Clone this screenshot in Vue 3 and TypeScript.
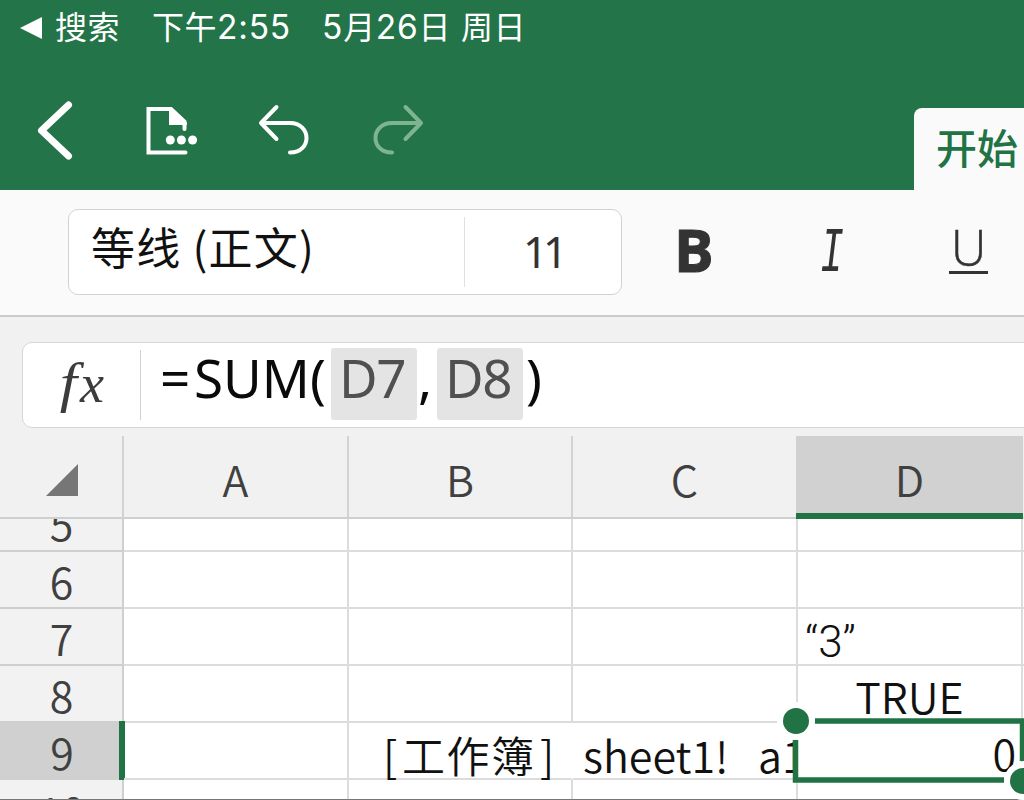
<script setup lang="ts">
interface Cell {
  text?: string
  kind?: string
  open?: boolean
}
interface Row {
  label: string
  kind: string
  cells: Cell[]
}

const columns = ['A', 'B', 'C', 'D']
const blank = (): Cell[] => [{}, {}, {}, {}]
const rows: Row[] = [
  { label: '5', kind: 'first', cells: blank() },
  { label: '6', kind: '', cells: blank() },
  { label: '7', kind: '', cells: [{}, {}, {}, { text: '“3”', kind: 'left' }] },
  { label: '8', kind: '', cells: [{}, {}, {}, { text: 'TRUE', kind: 'center' }] },
  { label: '9', kind: 'active', cells: [{}, { kind: 'long', open: true }, {}, { text: '0', kind: 'right' }] },
  { label: '10', kind: 'last', cells: blank() },
]
</script>

<template>
  <div class="screen">
    <header class="top">
      <div class="status">
        <svg class="tri" width="24" height="24" viewBox="0 0 24 24"><path d="M1 12L23 1V23Z" fill="#fff" /></svg>
        <span class="s1">搜索</span>
        <span class="s2">下午<b>2:55</b></span>
        <span class="s3"><b>5</b>月<b>26</b>日</span>
        <span class="s4">周日</span>
      </div>
      <div class="nav">
        <svg class="icons" width="440" height="82" viewBox="0 0 440 82" fill="none" stroke="#fff" stroke-linecap="round">
          <path d="M68.500 25L41.500 50.500L68.500 76" stroke-width="7" stroke-linejoin="round" />
          <path d="M185.500 72.500H148.500V29H171L184.500 41.500V49" stroke-width="4" />
          <path d="M169 27H171.500L187 43V45H169Z" fill="#fff" stroke="none" />
          <g fill="#fff" stroke="none"><circle cx="170.300" cy="60" r="4.500" /><circle cx="181.400" cy="60" r="4.500" /><circle cx="192.600" cy="60" r="4.500" /></g>
          <path d="M276.500 27L261 43L276.500 59M261 43H290C311.500 43 312.500 72.500 290 72.500" stroke-width="4" stroke-linejoin="round" />
          <path d="M405.500 27L421 43L405.500 59M421 43H392C370.500 43 369.500 72.500 392 72.500" stroke="#7fb491" stroke-width="4" stroke-linejoin="round" />
        </svg>
        <div class="tab">开始</div>
      </div>
    </header>

    <section class="ribbon">
      <div class="fontbox">
        <div class="fontname">等线 <i>(</i>正文<i>)</i></div>
        <div class="fontsize">11</div>
      </div>
      <div class="bold">B</div>
      <div class="italic"><span>I</span></div>
      <div class="underline">U</div>
    </section>

    <section class="formula">
      <div class="input">
        <div class="fx"><span class="f">f</span><span class="x">x</span></div>
        <div class="expr"><span class="eq">=</span><span class="sum">SUM(</span><span class="chip">D7</span><span class="comma">,</span><span class="chip">D8</span><span class="paren">)</span></div>
      </div>
    </section>

    <section class="sheet">
      <div class="heads">
        <div class="corner"><svg width="32" height="32" viewBox="0 0 32 32"><path d="M0 32L32 0V32Z" fill="#767676" /></svg></div>
        <div v-for="c in columns" :key="c" class="col" :class="['c' + c, { on: c === 'D' }]">{{ c }}</div>
        <div class="rest"></div>
      </div>
      <div v-for="r in rows" :key="r.label" class="row" :class="r.kind">
        <div class="rh"><span>{{ r.label }}</span></div>
        <div v-for="(cell, i) in r.cells" :key="i" class="cell" :class="['c' + columns[i], cell.kind, { open: cell.open }]">
          <div v-if="cell.kind === 'long'" class="spill"><span class="w1">[</span><span class="w2">工作簿</span><span class="w3">]</span><span class="w4">sheet1!</span><span class="w5">a1</span></div>
          <span v-else>{{ cell.text }}</span>
        </div>
        <div class="rest"></div>
      </div>
      <svg class="selection" width="240" height="84" viewBox="0 0 240 84">
        <path d="M31 12H238.500V52M11.500 31V71H220" fill="none" stroke="#217346" stroke-width="5.500" />
        <circle cx="12" cy="12" r="19" fill="#fff" />
        <circle cx="239" cy="72" r="19" fill="#fff" />
        <circle cx="12" cy="12" r="13" fill="#217346" />
        <circle cx="239" cy="72" r="13" fill="#217346" />
      </svg>
    </section>
  </div>
</template>

<style>
body {
  overflow: hidden;
}
</style>

<style scoped>
.screen {
  width: 1024px;
  height: 800px;
  overflow: hidden;
  position: relative;
  background: #f1f1f1;
  font-family: "Noto Sans CJK SC", sans-serif;
  white-space: nowrap;
}
.screen * {
  box-sizing: border-box;
}
.top {
  height: 190px;
  background: #237448;
  display: flex;
  flex-direction: column;
  justify-content: space-between;
}
.status {
  height: 56px;
  padding-left: 19px;
  display: flex;
  line-height: 51px;
  font-size: 32px;
  font-weight: 400;
  color: #fff;
}
.status b {
  font-family: Inter, sans-serif;
  font-weight: 400;
  font-size: 33.500px;
  letter-spacing: 0.800px;
}
.tri {
  margin: 16px 12px 0 0;
  flex: none;
}
.s1, .s2, .s3, .s4 {
  flex: none;
  letter-spacing: 0.500px;
}
.s1 { width: 97px; }
.s2 { width: 170px; }
.s3 { width: 139px; }
.nav {
  height: 82px;
  display: flex;
  justify-content: space-between;
}
.icons {
  margin-top: -28px;
}
.tab {
  width: 110px;
  height: 82px;
  padding-left: 22px;
  border-radius: 8px 0 0 0;
  background: #fafafa;
  color: #217346;
  font-size: 41px;
  font-weight: 500;
  line-height: 76px;
}
.ribbon {
  height: 127px;
  background: #fafafa;
  border-bottom: 2px solid #cbcbcb;
  padding: 19px 0 0 68px;
  display: flex;
  color: #333;
}
.fontbox {
  width: 554px;
  height: 86px;
  flex: none;
  display: flex;
  align-items: center;
  border: 1.500px solid #d2d2d2;
  border-radius: 10px;
  background: #fff;
}
.fontname {
  width: 396px;
  height: 70px;
  padding-left: 22px;
  border-right: 1px solid #e0e0e0;
  font-size: 44px;
  line-height: 59px;
  letter-spacing: 1.200px;
  color: #111;
}
.fontname i {
  font-style: normal;
}
.fontsize {
  flex: 1;
  text-align: center;
  font: 400 43px/82px "Noto Sans", sans-serif;
  letter-spacing: -4.500px;
}
.bold, .italic, .underline {
  flex: none;
  height: 86px;
}
.bold {
  width: 142px;
  padding-left: 52px;
  font: 700 59px/81px "Open Sans", sans-serif;
}
.bold {
  -webkit-text-stroke: 1px #333;
}
.italic {
  width: 132px;
  padding-left: 50px;
  font: italic 400 60px/91px "Liberation Mono", monospace;
}
.italic span {
  display: inline-block;
  transform: scale(0.66, 1.06);
}
.underline {
  width: 39px;
  height: 65px;
  margin-left: 53px;
  border-bottom: 3px solid #333;
  text-align: center;
  font: 300 49px/76px "Open Sans", sans-serif;
  -webkit-text-stroke: 0.500px #333;
}
.formula {
  height: 119px;
  background: #f1f1f1;
  padding: 25px 0 0 22px;
}
.input {
  width: 1020px;
  height: 86px;
  border: 1.500px solid #d6d6d6;
  border-radius: 10px;
  background: #fff;
  display: flex;
  align-items: center;
}
.fx {
  width: 118px;
  height: 70px;
  border-right: 1px solid #d0d0d0;
  padding-left: 38px;
  font: italic 400 54px/66px "Liberation Serif", serif;
  color: #3c3c3c;
}
.fx .f {
  display: inline-block;
  transform: scaleX(1.15);
}
.fx .x {
  display: inline-block;
  margin-left: 4px;
  transform: translateY(1px);
}
.expr {
  display: flex;
  height: 72px;
  margin-top: -2px;
  padding-left: 19px;
  font: 400 53px/60px "Noto Sans", sans-serif;
  color: #0a0a0a;
}
.eq { width: 34px; }
.sum { width: 137px; }
.chip {
  width: 86px;
  background: #e4e4e4;
  border-radius: 3px;
  color: #505050;
  padding-left: 8px;
  letter-spacing: -1.500px;
}
.comma { width: 20px; padding-left: 1px; }
.paren { padding-left: 3px; }
.sheet {
  position: relative;
}
.heads, .row {
  display: flex;
}
.heads {
  height: 83px;
}
.corner {
  width: 124px;
  border-right: 2px solid #d2d2d2;
  border-bottom: 2px solid #cfcfcf;
  padding: 28px 0 0 46px;
}
.col {
  border-right: 2px solid #d2d2d2;
  border-bottom: 2px solid #cfcfcf;
  text-align: center;
  font-size: 43px;
  font-weight: 350;
  line-height: 84px;
  color: #404040;
}
.cA { width: 225px; }
.cB { width: 224px; }
.cC { width: 225px; }
.cD { width: 225px; }
.col.on {
  width: 227px;
  margin-left: -2px;
  background: #d1d1d1;
  border-right: 0;
  border-bottom: 6px solid #217346;
}
.rest {
  flex: 1;
  border-bottom: 2px solid #dcdcdc;
}
.row {
  height: 57px;
  background: #fff;
}
.rh {
  width: 124px;
  background: #f2f2f2;
  border-right: 2px solid #cfcfcf;
  border-bottom: 2px solid #cfcfcf;
  text-align: center;
  font-size: 43px;
  font-weight: 350;
  line-height: 57px;
  padding-left: 1px;
  color: #404040;
}
.cell {
  border-right: 2px solid #dcdcdc;
  border-bottom: 2px solid #dcdcdc;
  font-size: 43px;
  font-weight: 350;
  line-height: 59px;
  color: #111;
  height: 100%;
}
.row.first { height: 33px; }
.row.first .rh { line-height: 7px; overflow: hidden; }
.row.last { height: 20px; border-bottom: 1px solid #777; }
.row.last .rh { line-height: 60px; border-bottom: 0; overflow: hidden; }
.row.last .cell { border-bottom: 0; }
.row.active .rh {
  width: 125px;
  margin: -2px -1px 0 0;
  padding-left: 5px;
  height: 59px;
  line-height: 61px;
  background: #d0d0d0;
  border-right: 6px solid #217346;
  border-bottom: 0;
}
.cell.left {
  padding-left: 7px;
  font-family: Roboto, sans-serif;
  font-weight: 300;
  font-size: 44px;
  line-height: 66px;
}
.cell.center { text-align: center; }
.cell.right { text-align: right; padding-right: 5px; line-height: 59px; }
.cell.open { border-right-color: #fff; }
.spill {
  display: flex;
  width: 448px;
  height: 55px;
  line-height: 62px;
}
.spill span { flex: none; }
.w1 { width: 53px; padding-left: 34px; }
.w2 { width: 138px; letter-spacing: 1.500px; }
.w3 { width: 43px; }
.w4 { width: 175px; }
.spill .w5 { width: 38px; overflow: hidden; }
.selection {
  position: absolute;
  left: 784px;
  top: 273px;
  overflow: visible;
}
</style>
